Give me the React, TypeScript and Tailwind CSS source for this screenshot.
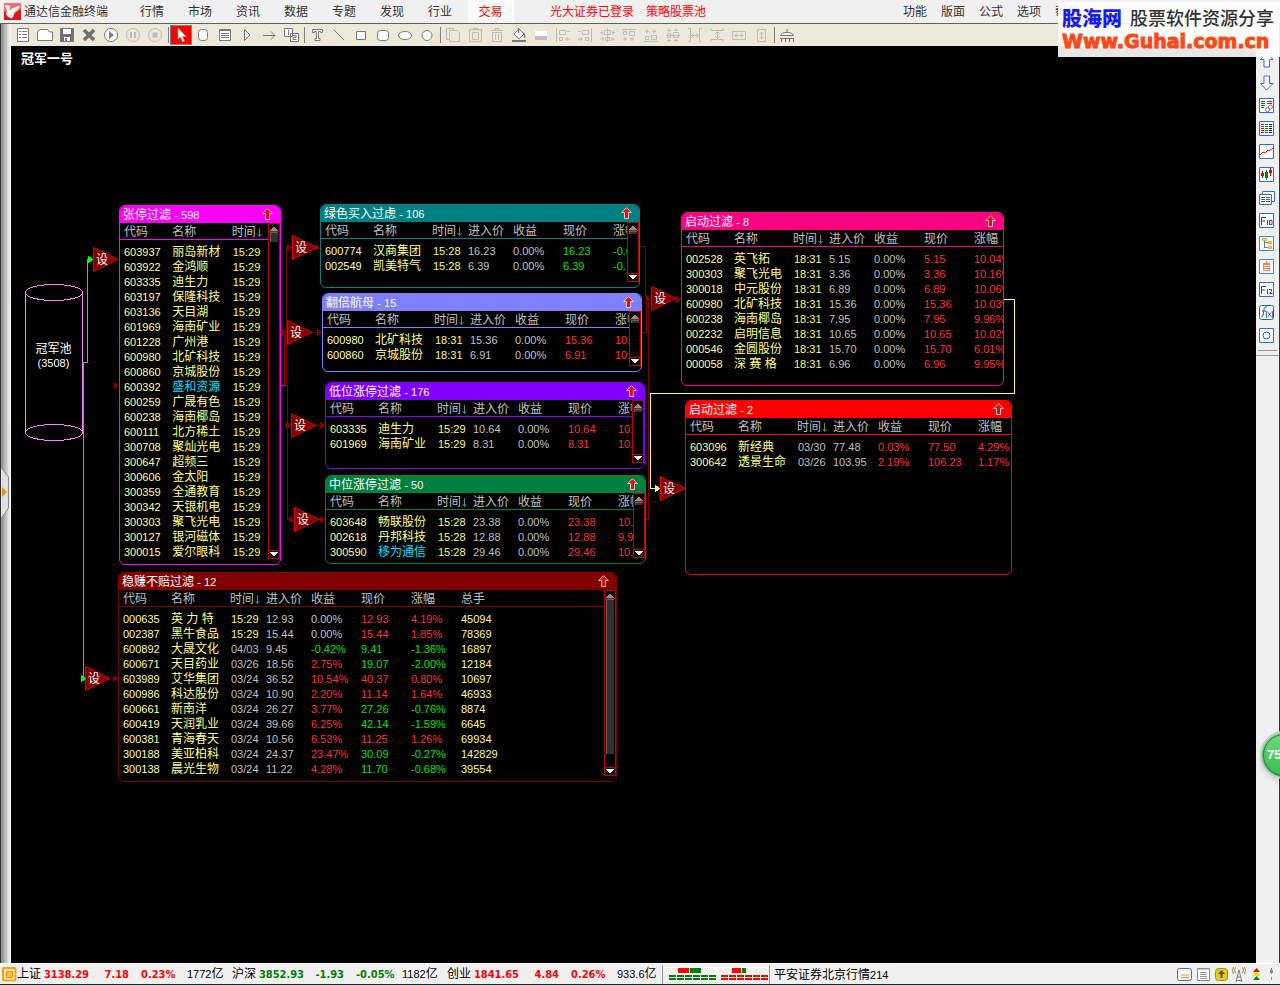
import React from "react";

const RED = "text-[#ff3232]";
const GREEN = "text-[#00e600]";
const GRAY = "text-[#c0c0c0]";
const YELLOW = "text-[#ffff60]";

type Row = { code: string; name: string; time: string; rest?: string[]; picked?: boolean; tone?: string };
type PanelData = {
  title: string;
  count: number;
  box: string;
  head: string;
  line: string;
  cols: string[];
  rows: Row[];
  scroll?: boolean;
  thumb?: string;
};

const WIDE = ["代码", "名称", "时间", "进入价", "收益", "现价", "涨幅"];
const COL_W = ["w-[52px]", "w-[59px]", "w-[36px]", "w-[45px]", "w-[50px]", "w-[50px]", "w-[50px]", ""];

const row = (line: string, tone = RED): Row => {
  const [code, name, time, ...rest] = line.split("|");
  return { code, name: name.replace("*", ""), time, rest, picked: name.startsWith("*"), tone };
};

const PANELS: PanelData[] = [
  {
    title: "张停过滤", count: 598,
    box: "left-[108px] top-[159px] w-[162px] h-[360px] border-[#ff00ff]",
    head: "bg-[#ff00ff]", line: "border-[#ff00ff]",
    cols: WIDE.slice(0, 3), scroll: true, thumb: "h-[10px]",
    rows: [
      "603937|丽岛新材", "603922|金鸿顺", "603335|迪生力", "603197|保隆科技", "603136|天目湖", "601969|海南矿业",
      "601228|广州港", "600980|北矿科技", "600860|京城股份", "600392|*盛和资源", "600259|广晟有色", "600238|海南椰岛",
      "600111|北方稀土", "300708|聚灿光电", "300647|超频三", "300606|金太阳", "300359|全通教育", "300342|天银机电",
      "300303|聚飞光电", "300127|银河磁体", "300015|爱尔眼科",
    ].map((s) => row(s + "|15:29")),
  },
  {
    title: "绿色买入过虑", count: 106,
    box: "left-[309px] top-[158px] w-[320px] h-[84px] border-[#008080]",
    head: "bg-[#008080]", line: "border-[#008080]",
    cols: WIDE, scroll: true, thumb: "h-[3px]",
    rows: [
      row("600774|汉商集团|15:28|16.23|0.00%|16.23|-0.6", GREEN),
      row("002549|凯美特气|15:28|6.39|0.00%|6.39|-0.7", GREEN),
    ],
  },
  {
    title: "翻倍航母", count: 15,
    box: "left-[311px] top-[247px] w-[320px] h-[79px] border-[#8080ff]",
    head: "bg-[#8080ff]", line: "border-[#8080ff]",
    cols: WIDE, scroll: true, thumb: "h-[3px]",
    rows: [row("600980|北矿科技|18:31|15.36|0.00%|15.36|10.0"), row("600860|京城股份|18:31|6.91|0.00%|6.91|10.0")],
  },
  {
    title: "低位涨停过滤", count: 176,
    box: "left-[314px] top-[336px] w-[320px] h-[87px] border-[#8000ff]",
    head: "bg-[#8000ff]", line: "border-[#8000ff]",
    cols: WIDE, scroll: true, thumb: "h-[3px]",
    rows: [row("603335|迪生力|15:29|10.64|0.00%|10.64|10.0"), row("601969|海南矿业|15:29|8.31|0.00%|8.31|10.0")],
  },
  {
    title: "中位涨停过滤", count: 50,
    box: "left-[314px] top-[429px] w-[321px] h-[89px] border-[#008040]",
    head: "bg-[#008040]", line: "border-[#008040]",
    cols: WIDE, scroll: true, thumb: "h-[3px]",
    rows: [
      row("603648|畅联股份|15:28|23.38|0.00%|23.38|10.0"),
      row("002618|丹邦科技|15:28|12.88|0.00%|12.88|9.9"),
      row("300590|*移为通信|15:28|29.46|0.00%|29.46|10.0"),
    ],
  },
  {
    title: "启动过滤", count: 8,
    box: "left-[670px] top-[166px] w-[323px] h-[174px] border-[#ff0080]",
    head: "bg-[#ff0080]", line: "border-[#ff0080]",
    cols: WIDE,
    rows: [
      row("002528|英飞拓|18:31|5.15|0.00%|5.15|10.04%"),
      row("300303|聚飞光电|18:31|3.36|0.00%|3.36|10.16%"),
      row("300018|中元股份|18:31|6.89|0.00%|6.89|10.06%"),
      row("600980|北矿科技|18:31|15.36|0.00%|15.36|10.03%"),
      row("600238|海南椰岛|18:31|7.95|0.00%|7.95|9.96%"),
      row("002232|启明信息|18:31|10.65|0.00%|10.65|10.02%"),
      row("000546|金圆股份|18:31|15.70|0.00%|15.70|6.01%"),
      row("000058|深 赛 格|18:31|6.96|0.00%|6.96|9.95%"),
    ],
  },
  {
    title: "启动过滤", count: 2,
    box: "left-[674px] top-[354px] w-[327px] h-[175px] border-[#ff0000]",
    head: "bg-[#ff0000]", line: "border-[#ff0000]",
    cols: WIDE,
    rows: [
      row("603096|新经典|03/30|77.48|0.03%|77.50|4.29%"),
      row("300642|透景生命|03/26|103.95|2.19%|106.23|1.17%"),
    ],
  },
  {
    title: "稳赚不赔过滤", count: 12,
    box: "left-[107px] top-[526px] w-[499px] h-[210px] border-[#800000]",
    head: "bg-[#800000]", line: "border-[#800000]",
    cols: [...WIDE, "总手"], scroll: true, thumb: "h-[155px]",
    rows: [
      row("000635|英 力 特|15:29|12.93|0.00%|12.93|4.19%|45094"),
      row("002387|黑牛食品|15:29|15.44|0.00%|15.44|1.85%|78369"),
      row("600892|大晟文化|04/03|9.45|-0.42%|9.41|-1.36%|16897", GREEN),
      row("600671|天目药业|03/26|18.56|2.75%|19.07|-2.00%|12184", GREEN),
      row("603989|艾华集团|03/24|36.52|10.54%|40.37|0.80%|10697"),
      row("600986|科达股份|03/24|10.90|2.20%|11.14|1.64%|46933"),
      row("600661|新南洋|03/24|26.27|3.77%|27.26|-0.76%|8874", GREEN),
      row("600419|天润乳业|03/24|39.66|6.25%|42.14|-1.59%|6645", GREEN),
      row("600381|青海春天|03/24|10.56|6.53%|11.25|1.26%|69934"),
      row("300188|美亚柏科|03/24|24.37|23.47%|30.09|-0.27%|142829", GREEN),
      row("300138|晨光生物|03/24|11.22|4.28%|11.70|-0.68%|39554", GREEN),
    ],
  },
];

function cellTone(i: number, v: string, tone?: string) {
  if (i === 0) return GRAY;
  if (i === 1) return v.startsWith("-") ? GREEN : v === "0.00%" ? GRAY : RED;
  if (i === 4) return "text-[#ffff80]";
  return tone ?? RED;
}

function ScrollBar({ thumb = "" }: { thumb?: string }) {
  return (
    <div className="flex w-3 shrink-0 flex-col border border-[#c00000] bg-black mb-[5px]">
      <button aria-label="向上滚动" className="flex h-2 items-end justify-center border-b border-[#c00000]">
        <svg width="8" height="5" shapeRendering="crispEdges"><path d="M4 0L8 5H0Z" fill="#909090" /></svg>
      </button>
      <div className="flex-1 px-px">
        <div className={`border-l border-t border-[#606060] bg-[#303030] ${thumb}`} />
      </div>
      <button aria-label="向下滚动" className="flex h-2 items-start justify-center border-t border-[#c00000] pt-px">
        <svg width="8" height="5" shapeRendering="crispEdges"><path d="M0 0H8L4 5Z" fill="#fff" /></svg>
      </button>
    </div>
  );
}

function Panel({ p }: { p: PanelData }) {
  return (
    <section className={`absolute flex flex-col overflow-hidden rounded-md border bg-black ${p.box}`}>
      <header className={`flex h-[17px] shrink-0 items-center justify-between pl-[3px] pr-[7px] text-white ${p.head}`}>
        <h2 className="pt-px text-xs leading-4">
          {p.title} <span className="text-[11px]">- {p.count}</span>
        </h2>
        <button aria-label="展开">
          <svg width="11" height="13" viewBox="0 0 11 13" className="block">
            <path d="M5.500 .7L10.300 5.500H7.500V11.500H3.500V5.500H.7Z" fill="#f00" stroke="#d0d0d0" />
          </svg>
        </button>
      </header>
      <div className="flex min-h-0 flex-1">
        <div className="min-w-0 flex-1 overflow-hidden">
          <table className="w-full table-fixed border-separate border-spacing-0 whitespace-nowrap text-left">
            <thead>
              <tr>
                {p.cols.map((c, i) => (
                  <th
                    key={c}
                    className={`h-[17px] border-b p-0 pt-[2px] text-xs leading-[14px] font-normal text-[#c0c0c0] first:pl-1 ${p.line} ${i === p.cols.length - 1 && i > 2 ? "" : COL_W[i]}`}
                  >
                    {c}
                    {i === 2 && (
                      <svg width="5" height="9" viewBox="0 0 5 9" className="ml-px inline">
                        <path d="M2.500 0V8M.5 6L2.500 8.500L4.500 6" stroke="#4a9090" fill="none" />
                      </svg>
                    )}
                  </th>
                ))}
              </tr>
            </thead>
            <tbody className="text-[11px] leading-[15px] [&>tr:first-child>td]:pt-[5px]">
              {p.rows.map((r) => (
                <tr key={r.code}>
                  <td className="p-0 pl-1 text-[#ffffa0]">{r.code}</td>
                  <td className={`p-0 text-xs leading-[15px] ${r.picked ? "text-[#00e0ff]" : "text-[#ffff80]"}`}>{r.name}</td>
                  <td className={`p-0 pl-px ${r.time.includes("/") ? GRAY : YELLOW}`}>{r.time}</td>
                  {r.rest?.map((v, i) => (
                    <td key={i} className={`p-0 ${cellTone(i, v, r.tone)}`}>{v}</td>
                  ))}
                </tr>
              ))}
            </tbody>
          </table>
        </div>
        {p.scroll && <ScrollBar thumb={p.thumb} />}
      </div>
    </section>
  );
}

const FUNNELS = [
  "left-[82px] top-[201px]", "left-[281px] top-[189px]", "left-[276px] top-[274px]", "left-[280px] top-[367px]",
  "left-[283px] top-[461px]", "left-[640px] top-[240px]", "left-[649px] top-[430px]", "left-[74px] top-[620px]",
];

function Funnel({ at }: { at: string }) {
  return (
    <button className={`absolute flex h-[26px] w-[26px] items-center pl-[3px] ${at}`}>
      <svg width="26" height="26" className="absolute inset-0">
        <path d="M.5 .5L25 12.500L.5 24.500Z" fill="#800000" stroke="#e00000" />
      </svg>
      <span className="relative text-xs leading-none text-white">设</span>
    </button>
  );
}

/* Arrow heads pointing right, given by their tip. */
const tips = (pts: number[][]) => pts.map(([x, y]) => `M${x - 5} ${y - 4}V${y + 4}L${x} ${y}Z`).join("");

function Wires() {
  return (
    <svg width="1245" height="917" viewBox="11 46 1245 917" className="absolute left-0 top-0" fill="none" shapeRendering="crispEdges">
      <g stroke="#ff80ff">
        <ellipse cx="54" cy="292.500" rx="28.500" ry="8" />
        <ellipse cx="54" cy="432.500" rx="28.500" ry="8" />
        <path d="M25.500 292V433M82.500 292V433" />
      </g>
      <path d="M83 362.500H87.500V259.500H90M83.500 362V678.500" stroke="#0f0" />
      <path d={tips([[93, 259.5], [86, 678.5]])} fill="#0f0" />
      <path
        d="M284.500 385V332.500M286.500 385V247.500H289M285 385.500H287.500V519.500H291M287.500 425.500H289M313 332.500H320M314 425.500H322M319 519.500H323M110 678.500H115M640 246.500H645.500V298.500M642 332.500H646.500V298.500M645 425.500H648.500M646 519.500H648.500V299"
        stroke="#800000"
      />
      <path
        d={tips([[292, 247.5], [287, 332.5], [291, 425.5], [294, 519.5], [320, 247.5], [322, 332.5], [325, 425.5], [325, 519.5], [119, 385.5], [651, 298.5], [681, 299.5], [118, 678.5], [685, 488.5]])}
        fill="#800000"
      />
      <path d="M281 385.500H285" stroke="#c000c0" />
      <path d="M1004 299.500H1014.500V393.500H650.500V488.500H657" stroke="#ffff80" />
      <path d={tips([[660, 488.5]])} fill="#ffff80" />
    </svg>
  );
}

const W = "#fff";
type Tool = { label: string; art: React.ReactNode; on?: boolean; off?: boolean } | null;
const TOOLS: Tool[] = [
  { label: "新建", art: <><path d="M2.500 1.500H13.500V14.500H2.500Z" fill={W} /><path d="M4 4.500H6M7 4.500H12M4 7.500H6M7 7.500H12M4 10.500H6M7 10.500H12" /></> },
  { label: "打开", art: <path d="M.5 13.500V4.500L3 2.500H10.500L12.500 5H15.500V13.500Z" fill={W} /> },
  { label: "保存", art: <><path d="M1.500 1.500H14.500V14.500H1.500Z" fill="#707070" /><path d="M4 2H12V7H4ZM5 10H11V14H5Z" fill={W} stroke="none" /><path d="M6 11H8V14H6Z" fill="#707070" stroke="none" /></> },
  { label: "删除", art: <path d="M3 3L13 13M13 3L3 13" strokeWidth="3.500" stroke="#707070" /> },
  { label: "运行", art: <><circle cx="8" cy="8" r="6.500" fill={W} /><path d="M6 4L11 8L6 12Z" fill="#808080" stroke="none" /></> },
  { label: "暂停", off: true, art: <><circle cx="8" cy="8" r="6.500" /><path d="M6 5V11M10 5V11" strokeWidth="2" /></> },
  { label: "停止", off: true, art: <><circle cx="8" cy="8" r="6.500" /><path d="M6 6H10V10H6Z" fill="#c0c0b8" /></> },
  null,
  { label: "选择", on: true, art: <path d="M5 1V12L7.500 10L9.500 15L11.500 14L9.500 9.500H13Z" fill={W} stroke="#a0a0a0" strokeWidth=".5" /> },
  { label: "股票池", art: <rect x="3.500" y="2.500" width="9" height="11" rx="3" fill={W} /> },
  { label: "列表", art: <><path d="M2.500 2.500H13.500V13.500H2.500Z" fill={W} /><path d="M2 3.500H14M4 6.500H12M4 8.500H12M4 10.500H12" /></> },
  { label: "过滤器", art: <path d="M5.500 2.500L11 8L5.500 13.500Z" fill={W} /> },
  { label: "连线", art: <path d="M2 8.500H14M10 4.500L14 8.500L10 12.500" /> },
  { label: "排序", art: <><path d="M1.500 1.500H9.500V9.500H1.500ZM7.500 6.500H15.500V14.500H7.500Z" fill={W} /><path d="M5.500 3V8M9.500 8.500H13V10.500H10V12.500H13.500" /></> },
  null,
  { label: "文本", art: <path d="M3.500 2.500H13.500V5.500H11.500V4.500H9.500V11.500H11V13.500H6V11.500H7.500V4.500H5.500V5.500H3.500Z" fill={W} /> },
  { label: "直线", art: <path d="M3 3L13 13" /> },
  { label: "矩形", art: <path d="M3.500 4.500H12.500V12.500H3.500Z" fill={W} /> },
  { label: "圆角矩形", art: <rect x="2.500" y="3.500" width="11" height="10" rx="3" fill={W} /> },
  { label: "椭圆", art: <ellipse cx="8" cy="8.500" rx="6.500" ry="4" fill={W} /> },
  { label: "圆", art: <circle cx="8" cy="8.500" r="5" fill={W} /> },
  null,
  { label: "复制", off: true, art: <path d="M1.500 1.500H8.500V3.500M1.500 1.500V12.500H4.500M4.500 3.500H12.500L14.500 5.500V14.500H4.500Z" /> },
  { label: "粘贴", off: true, art: <path d="M2.500 2.500H14.500V14.500H2.500ZM6 2.500V1.500H11V3.500M5.500 5.500H11.500V12.500H5.500Z" /> },
  { label: "回收站", off: true, art: <path d="M2 3.500H14M6 3V1.500H10V3M3.500 5.500H12.500V14.500H3.500ZM6.500 7V13M9.500 7V13" /> },
  { label: "填充", art: <><path d="M3 7L8 2L13 7L8 12Z" fill={W} /><path d="M7.500 1V6M12 6C14 7 14 9 13.500 11" strokeWidth="1.500" /><path d="M1 14H15" strokeWidth="2" /></> },
  { label: "线色", off: true, art: <><path d="M2 4H14V9H2Z" fill={W} stroke="none" /><path d="M2 9H14V13H2Z" fill="#c0c0c0" stroke="none" /></> },
  { label: "左对齐", off: true, art: <path d="M1.500 1V15M4.500 3.500H10.500V7.500H4.500ZM4.500 10.500H7.500V13.500H4.500ZM12 4.500H15M10 12H15M12 10V14" /> },
  { label: "右对齐", off: true, art: <path d="M14.500 1V15M5.500 3.500H11.500V7.500H5.500ZM8.500 10.500H11.500V13.500H8.500ZM1 4.500H4M1 12H6M4 10V14" /> },
  { label: "水平居中", off: true, art: <path d="M8.500 1V15M5.500 3.500H11.500V7.500H5.500ZM6.500 10.500H10.500V13.500H6.500ZM1 5.500H4M13 5.500H16M1 12H5M12 12H16M3 3.500V7.500M14 3.500V7.500M4 10V14M13 10V14" /> },
  { label: "上对齐", off: true, art: <path d="M1 2.500H15M2.500 4.500H5.500V7.500H2.500ZM8.500 4.500H13.500V8.500H8.500ZM4 10V14M11 10V14M2 12H6M9 12H13" /> },
  { label: "下对齐", off: true, art: <path d="M1 14.500H15M2.500 9.500H5.500V12.500H2.500ZM8.500 8.500H13.500V12.500H8.500ZM4 2V7M11 2V6M2 4.500H6M9 4.500H13" /> },
  { label: "垂直居中", off: true, art: <path d="M1 8.500H15M2.500 6.500H5.500V10.500H2.500ZM8.500 5.500H13.500V10.500H8.500ZM4 1V5M11 1V4M4 12V15M11 12V15M2 3.500H6M9 3.500H13M2 13.500H6M9 13.500H13" /> },
  { label: "水平等距", off: true, art: <path d="M1 1.500H3.500V14.500H1M15 1.500H12.500V14.500H15M5 8.500H11M7 6L4.500 8.500L7 11M9 6L11.500 8.500L9 11" /> },
  { label: "垂直等距", off: true, art: <path d="M2 1V3.500H14V1M2 15V12.500H14V15M8.500 5V11M6 7L8.500 4.500L11 7M6 9L8.500 11.500L11 9" /> },
  { label: "等宽", off: true, art: <path d="M1.500 4.500H14.500V12.500H1.500ZM4 8.500H12M6 6.500L4 8.500L6 10.500M10 6.500L12 8.500L10 10.500" /> },
  { label: "等高", off: true, art: <path d="M4.500 2.500H12.500V14.500H4.500ZM8.500 5V12M6.500 7L8.500 5L10.500 7M6.500 10L8.500 12L10.500 10" /> },
  null,
  { label: "清理", art: <><path d="M1.500 8.500C2 6 5 5.500 8 5.500S14 6 14.500 8.500Z" fill={W} /><path d="M8 2V5M2.500 11V15M6.500 11V15M10.500 11V15M14.500 11V15M1 11.500H15" /></> },
];

const BLUE = "#2a6fe0";
const Box = ({ children, c = BLUE }: { children?: React.ReactNode; c?: string }) => (
  <><path d="M.5 .5H14.500V14.500H.5Z" fill="#fff" stroke={c} />{children}</>
);
const SIDE: { label: string; art: React.ReactNode }[] = [
  { label: "后退", art: <path d="M1 7.500L6.500 2V5H14V10H6.500V13Z" fill="#fff" stroke={BLUE} /> },
  { label: "上移", art: <path d="M7.500 1L14 7.500H10.500V15H5V7.500H1.500Z" fill="#fff" stroke={BLUE} /> },
  { label: "下移", art: <path d="M7.500 15L14 8.500H10.500V1H5V8.500H1.500Z" fill="#fff" stroke={BLUE} /> },
  { label: "自选设置", art: <Box><path d="M2 3.500H6M2 5.500H6M2 7.500H6M2 9.500H5" stroke="#080" /><path d="M8 3.500H13M8 5.500H13" stroke="#e00" /><circle cx="8.500" cy="11.500" r="2" stroke="#777" /><circle cx="11.500" cy="9" r="2" stroke="#777" /></Box> },
  { label: "行情列表", art: <Box><path d="M2 3.500H5M2 5.500H5M2 7.500H5M2 9.500H5M2 11.500H5" stroke="#e00" /><path d="M6 3.500H9M6 5.500H9M6 7.500H9M6 9.500H9M6 11.500H9" stroke="#080" /><path d="M10 3.500H13M10 5.500H13M10 7.500H13M10 9.500H13M10 11.500H13" stroke="#00d" /></Box> },
  { label: "分时", art: <Box><path d="M1 11L4 8L6 9L9 6L10 7L14 4" stroke="#e00" /></Box> },
  { label: "K线", art: <Box><path d="M3.500 4V11M11.500 1V9" stroke="#e00" /><path d="M2 6H5V9H2ZM10 3H13V6H10Z" fill="#e00" /><path d="M7.500 3V13" stroke="#080" /><path d="M6 5H9V11H6Z" fill="#080" /></Box> },
  { label: "多窗口", art: <><path d="M3.500 1.500H15.500V11.500H3.500Z" fill="#fff" stroke={BLUE} /><path d="M.5 4.500H12.500V14.500H.5Z" fill="#fff" stroke={BLUE} /><path d="M2 7.500H6M7 7.500H11M2 9.500H6M7 9.500H11M2 11.500H6M7 11.500H11" stroke="#555" /></> },
  { label: "F10", art: <Box><path d="M2.500 12V4.500H7M2.500 8H6M8.500 7V12M10.500 7.500H13V11.500H10.500Z" stroke="#2040d0" /></Box> },
  { label: "板块树", art: <Box c="#1e90ff"><path d="M5.500 5V12M5.500 6.500H9M5.500 11.500H9" stroke="#5080e0" /><path d="M3.500 2.500H7.500V4.500H3.500ZM9.500 5.500H12.500V7.500H9.500ZM9.500 10.500H12.500V12.500H9.500Z" stroke="#f0a800" fill="#ffe080" /></Box> },
  { label: "自选股", art: <Box c="#1e90ff"><path d="M4 4H11V12H4ZM7 2H8V4H7Z" fill="#ff7f40" /><path d="M5 6.500H10M5 8.500H10M5 10.500H10" stroke="#fff" /></Box> },
  { label: "F12", art: <Box><path d="M2.500 12V4.500H7M2.500 8H6M8.500 7V12M10 7.500H12.500V9.500L10.500 11.500H13.500" stroke="#2040d0" /></Box> },
  { label: "公式", art: <><rect x=".5" y=".5" width="14" height="14" rx="2" fill="#fff" stroke="#087878" /><path d="M8 2C5 1 5 5 4.500 8S4 12 2 12M3 6H7M8 6C7 8 7 11 8 13M13 6C14 8 14 11 13 13M9 7.500L12 11.500M12 7.500L9 11.500" stroke="#2040d0" /></> },
  { label: "刷新", art: <Box><circle cx="7.500" cy="7.500" r="3.500" stroke="#0060d0" /></Box> },
];

const INDEXES = [
  { n: "上证", v: "3138.29", d: "7.18", p: "0.23%", a: "1772", c: "text-[#f00]" },
  { n: "沪深", v: "3852.93", d: "-1.93", p: "-0.05%", a: "1182", c: "text-[#008000]" },
  { n: "创业", v: "1841.65", d: "4.84", p: "0.26%", a: "933.6", c: "text-[#f00]" },
];

export default function App() {
  return (
    <div className="relative flex min-h-screen flex-col overflow-hidden bg-[#f0f0f0] font-['Liberation_Sans','Noto_Sans_CJK_SC',sans-serif] text-xs text-[#333]">
      <nav className="flex h-6 shrink-0 items-center border-b border-[#606060] pl-1">
        <svg width="17" height="17" viewBox="0 0 17 17">
          <path d="M0 0H17V17H0Z" fill="#d81818" />
          <path d="M0 0H17V6L7 12L0 8Z" fill="#f07070" />
          <path d="M1 2L6 2.500L5.500 7.500L9 5L16 2.500C15 6 13 8 10.500 9.500C10 12 9.500 14 7.500 15.500C5 15 3 13 1.500 10.500L3.500 8.500C2.500 6.500 1.500 4.500 1 2Z" fill="#fff" opacity=".92" />
        </svg>
        <span className="w-[107px] pl-[3px]">通达信金融终端</span>
        {["行情", "市场", "资讯", "数据", "专题", "发现", "行业"].map((t) => (
          <button key={t} className="w-12 text-center">{t}</button>
        ))}
        <button className="ml-1 h-full w-[46px] border-r border-white bg-[#fafafa] text-center text-[#f00]">交易</button>
        <a href="#account" className="ml-9 text-[#f00]">光大证券已登录</a>
        <a href="#pool" className="ml-3 text-[#f00]">策略股票池</a>
        <div className="ml-auto flex w-[384px]">
          {["功能", "版面", "公式", "选项", "帮助"].map((t) => (
            <button key={t} className="w-[38px] text-center">{t}</button>
          ))}
        </div>
      </nav>

      <div className="relative flex flex-1">
        <aside className="relative w-[11px] shrink-0 border-l border-[#333] bg-linear-to-r from-[#888] to-white">
          <button aria-label="展开侧栏" className="absolute left-0 top-[443px]">
            <svg width="10" height="52" viewBox="0 0 10 52">
              <path d="M0 .5L7.500 10V41L0 51.500" fill="#e0e0e0" stroke="#888" />
              <path d="M1 20L6 25L1 30Z" fill="#e09a10" />
            </svg>
          </button>
        </aside>

        <div className="flex min-w-0 flex-1 flex-col">
          <div role="toolbar" className="flex h-[22px] shrink-0 items-center bg-[#ece9d8] pl-px">
            {TOOLS.map((t, i) =>
              t ? (
                <button
                  key={t.label}
                  aria-label={t.label}
                  className={`flex h-5 w-[22px] items-center justify-center ${t.on ? "border border-[#808080] bg-[#f00]" : ""}`}
                >
                  <svg width="16" height="16" viewBox="0 0 16 16" fill="none" stroke={t.off ? "#bdbdb5" : "#777"} className="shrink-0">
                    {t.art}
                  </svg>
                </button>
              ) : (
                <span key={i} className="flex w-1 justify-center"><i className="h-4 w-px bg-[#808080]" /></span>
              ),
            )}
          </div>

          <main className="relative flex-1 overflow-hidden bg-black">
            <h1 className="pl-[10px] pt-1 text-[13px] leading-[18px] font-bold text-white">冠军一号</h1>
            <Wires />
            <div className="absolute left-[14px] top-[296px] w-[57px] text-center text-xs leading-[14px] text-white">
              冠军池
              <div className="text-[11px] leading-[14px]">(3508)</div>
            </div>
            {PANELS.map((p) => <Panel key={p.title + p.count} p={p} />)}
            {FUNNELS.map((f) => <Funnel key={f} at={f} />)}
          </main>
        </div>

        <aside className="flex w-6 shrink-0 flex-col items-center border-r border-[#333] bg-[#f0f0f0] pt-px">
          {SIDE.map((s) => (
            <button key={s.label} aria-label={s.label} className="flex h-[23px] w-full items-center justify-center pr-px">
              <svg width="16" height="16" viewBox="0 0 16 16" fill="none">{s.art}</svg>
            </button>
          ))}
          <hr className="mt-[3px] w-[19px] border-[#999]" />
          <hr className="mt-1 w-full border-[#999]" />
        </aside>

        <button className="absolute -right-7 top-[707px] h-12 w-12 rounded-full border-2 border-[#c8c8c8] bg-linear-to-b from-[#70d880] to-[#38b850] pl-[5px] text-left text-[13px] font-bold text-white shadow-md outline-1 -outline-offset-4 outline-[#208040]">
          75
        </button>
      </div>

      <footer className="flex h-[22px] shrink-0 items-center border-b border-t border-b-[#222] border-t-white pl-[2px] pt-px text-black whitespace-nowrap">
        <svg width="15" height="15" viewBox="0 0 15 15" fill="none">
          <rect x="1" y="1" width="12.500" height="12.500" rx="1" fill="#ffe9b0" stroke="#f0a020" strokeWidth="2" />
          <path d="M4.500 4.500H10.500V10.500H4.500Z" fill="#f8c040" stroke="#e89010" />
        </svg>
        {INDEXES.map((x) => (
          <div key={x.n} className="grid w-[215px] grid-cols-[25px_47px_40px_12px_46px_45px] items-baseline">
            <span>{x.n}</span>
            <b className={`text-right font-['DejaVu_Sans_Condensed','DejaVu_Sans',sans-serif] text-[11px] ${x.c}`}>{x.v}</b>
            <b className={`text-right font-['DejaVu_Sans_Condensed','DejaVu_Sans',sans-serif] text-[11px] ${x.c}`}>{x.d}</b>
            <i />
            <b className={`font-['DejaVu_Sans_Condensed','DejaVu_Sans',sans-serif] text-[11px] ${x.c}`}>{x.p}</b>
            <span><span className="text-[11px]">{x.a}</span>亿</span>
          </div>
        ))}
        <i className="h-full w-px bg-[#999]" />
        <svg width="104" height="15" className="ml-[2px]" shapeRendering="crispEdges" fill="none">
          <path d="M.5 .5H50.500V6.500H.5ZM52.500 .5H102.500V6.500H52.500Z" stroke="#fff" />
          <path d="M13 1H24V6H13ZM67 1H76V6H67Z" fill="#f00" />
          <path d="M25 1H36V6H25ZM77 1H81V6H77Z" fill="#008000" />
          <path d="M4 9H51M4 12H51" stroke="#008000" strokeWidth="2" strokeDasharray="7 1" />
          <path d="M56 9H103M56 12H103" stroke="#f00" strokeWidth="2" strokeDasharray="7 1" />
        </svg>
        <i className="h-full w-px bg-[#999]" />
        <span className="ml-1">平安证券北京行情<span className="text-[11px]">214</span></span>
        <div className="ml-auto flex items-center gap-1 pr-1">
          <svg width="15" height="15" viewBox="0 0 15 15"><rect x=".5" y="1.500" width="14" height="12" rx="2" fill="#f4f4fa" stroke="#5070b0" /><path d="M4 8H12M4 10.500H12" stroke="#e0a020" /></svg>
          <svg width="15" height="15" viewBox="0 0 15 15"><path d="M1.500 1.500H13.500V13.500H1.500Z" fill="#fff" stroke="#888" /><path d="M1 2H14M4 5.500H11M4 7.500H11M4 9.500H11M4 11.500H11" stroke="#999" /></svg>
          <svg width="13" height="15" viewBox="0 0 13 15"><rect x=".5" y="1.500" width="12" height="12" rx="3" fill="#e0cc30" stroke="#a09010" /><path d="M6.500 3L10 7H7.500V11H5.500V7H3Z" fill="#605800" /></svg>
          <svg width="14" height="17" viewBox="0 0 14 17" fill="none" stroke="#808080"><path d="M7 4L4 16M7 4L10 16M5.500 11H8.500M4 14.500H10" /><path d="M3.500 1.500Q1.500 4 3.500 7M10.500 1.500Q12.500 4 10.500 7M1.500 1Q-.5 4 1.500 8M12.500 1Q14.500 4 12.500 8" stroke="#90901c" /></svg>
          <svg width="13" height="15" viewBox="0 0 13 15"><path d="M6.500 1L10 5H3Z" fill="#e00" /><path d="M6.500 4.500L11 9H2Z" fill="#f0e000" /><path d="M6.500 9L10 13H3Z" fill="#080" /></svg>
          <svg width="9" height="13" viewBox="0 0 9 13"><path d="M4.500 0V6M4.500 9V12" stroke="#888" /><path d="M3 2H6V5H3Z" fill="#888" /></svg>
        </div>
      </footer>

      <div className="absolute right-0 top-[2px] flex h-[55px] w-[222px] flex-col items-start overflow-hidden whitespace-nowrap bg-white/90 pl-1 pt-[5px]">
        <div className="flex items-center gap-2 leading-6">
          <strong className="text-[20px] font-black text-[#1a1af0]">股海网</strong>
          <span className="text-[18px] font-medium text-[#333]">股票软件资源分享</span>
        </div>
        <strong className="font-['DejaVu_Sans',sans-serif] text-[19px] leading-5 font-bold text-[#ff4818] [-webkit-text-stroke:1px_#ff4818]">Www.Guhai.com.cn</strong>
      </div>
    </div>
  );
}
